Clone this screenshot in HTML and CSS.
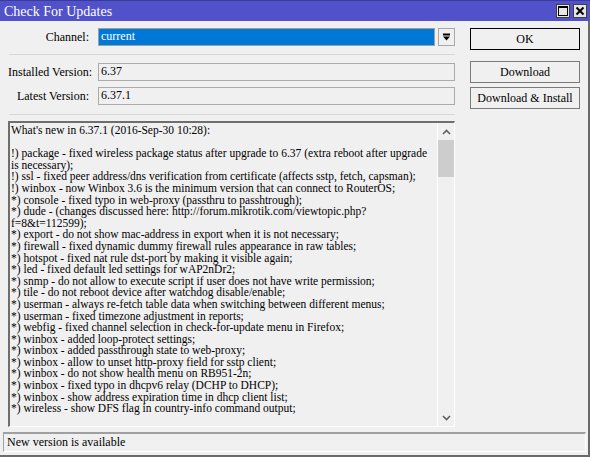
FILE: index.html
```html
<!DOCTYPE html>
<html>
<head>
<meta charset="utf-8">
<link rel="stylesheet" href="styles.css">
</head>
<body>
<div class="window">
  <div class="titlebar">
    <span class="title">Check For Updates</span>
    <div class="tb-buttons">
      <span class="tb-btn"><svg width="12" height="12" viewBox="0 0 12 12"><rect x="1.5" y="1.5" width="9" height="9" fill="none" stroke="#000" stroke-width="1"/><line x1="1" y1="2" x2="11" y2="2" stroke="#000" stroke-width="2"/></svg></span>
      <span class="tb-btn"><svg width="12" height="12" viewBox="0 0 12 12"><path d="M2.5 2.5 L9.5 9.5 M9.5 2.5 L2.5 9.5" stroke="#000" stroke-width="2"/></svg></span>
    </div>
  </div>
  <div class="body">
    <div class="main">
      <div class="left">
        <div class="row">
          <span class="label">Channel:</span>
          <div class="select">current</div>
          <span class="drop"><svg width="11" height="11" viewBox="0 0 11 11"><rect x="2" y="1.5" width="7" height="2" fill="#000"/><path d="M2 4.5 H9 L5.5 8.5 Z" fill="#000"/></svg></span>
        </div>
        <div class="sep"></div>
        <div class="row">
          <span class="label">Installed Version:</span>
          <div class="field">6.37</div>
        </div>
        <div class="row r3">
          <span class="label">Latest Version:</span>
          <div class="field">6.37.1</div>
        </div>
        <div class="sep sep2"></div>
        <div class="textarea">
          <div class="text">What's new in 6.37.1 (2016-Sep-30 10:28):<br>
<br>
!) package - fixed wireless package status after upgrade to 6.37 (extra reboot after upgrade is necessary);<br>
!) ssl - fixed peer address/dns verification from certificate (affects sstp, fetch, capsman);<br>
!) winbox - now Winbox 3.6 is the minimum version that can connect to RouterOS;<br>
*) console - fixed typo in web-proxy (passthru to passhtrough);<br>
*) dude - (changes discussed here: http://forum.mikrotik.com/viewtopic.php?<br>f=8&amp;t=112599);<br>
*) export - do not show mac-address in export when it is not necessary;<br>
*) firewall - fixed dynamic dummy firewall rules appearance in raw tables;<br>
*) hotspot - fixed nat rule dst-port by making it visible again;<br>
*) led - fixed default led settings for wAP2nDr2;<br>
*) snmp - do not allow to execute script if user does not have write permission;<br>
*) tile - do not reboot device after watchdog disable/enable;<br>
*) userman - always re-fetch table data when switching between different menus;<br>
*) userman - fixed timezone adjustment in reports;<br>
*) webfig - fixed channel selection in check-for-update menu in Firefox;<br>
*) winbox - added loop-protect settings;<br>
*) winbox - added passthrough state to web-proxy;<br>
*) winbox - allow to unset http-proxy field for sstp client;<br>
*) winbox - do not show health menu on RB951-2n;<br>
*) winbox - fixed typo in dhcpv6 relay (DCHP to DHCP);<br>
*) winbox - show address expiration time in dhcp client list;<br>
*) wireless - show DFS flag in country-info command output;</div>
          <div class="scroll">
            <span class="sarrow"><svg width="9" height="6" viewBox="0 0 9 6"><path d="M1 5 L4.5 1.5 L8 5" fill="none" stroke="#606060" stroke-width="1.6"/></svg></span>
            <div class="track"><div class="thumb"></div></div>
            <span class="sarrow"><svg width="9" height="6" viewBox="0 0 9 6"><path d="M1 1 L4.5 4.5 L8 1" fill="none" stroke="#606060" stroke-width="1.6"/></svg></span>
          </div>
        </div>
      </div>
      <div class="right">
        <div class="btn btn-ok">OK</div>
        <div class="btn btn-dl">Download</div>
        <div class="btn">Download &amp; Install</div>
      </div>
    </div>
    <div class="status">New version is available</div>
  </div>
</div>
</body>
</html>
```
FILE: styles.css
```css
html, body {
  margin: 0;
  padding: 0;
}
body {
  width: 590px;
  height: 457px;
  background: #f0f0f0;
  font-family: "Liberation Serif", "Times New Roman", serif;
  font-size: 12px;
  color: #000;
  overflow: hidden;
}
.window {
  width: 590px;
  height: 457px;
  box-sizing: border-box;
  border-right: 2px solid #6a6a6a;
  border-bottom: 2px solid #6a6a6a;
  display: flex;
  flex-direction: column;
}
.titlebar {
  height: 22px;
  background: #5151c9;
  border-top: 1px solid #3a3a9a;
  box-sizing: border-box;
  display: flex;
  align-items: center;
  justify-content: space-between;
  padding: 0 3px 0 4px;
  margin-right: -2px;
}
.title {
  color: #fff;
  font-size: 14px;
  padding-top: 1px;
}
.tb-buttons {
  display: flex;
  gap: 3px;
}
.tb-btn {
  width: 14px;
  height: 14px;
  background: #e6e6e6;
  border: 1px solid #404040;
  box-sizing: border-box;
  display: flex;
  align-items: center;
  justify-content: center;
}
.body {
  flex: 1;
  display: flex;
  flex-direction: column;
}
.main {
  display: flex;
  padding-top: 7px;
  flex: 1;
}
.left {
  width: 447px;
  padding-left: 8px;
  display: flex;
  flex-direction: column;
}
.row {
  display: flex;
  align-items: center;
  height: 18px;
}
.label {
  width: 81px;
  text-align: right;
  margin-right: 9px;
  white-space: nowrap;
}
.select {
  width: 337px;
  height: 18px;
  box-sizing: border-box;
  background: #0078d7;
  border: 1px solid #a0a0a0;
  color: #fff;
  padding-left: 2px;
  line-height: 15px;
}
.drop {
  width: 17px;
  height: 18px;
  box-sizing: border-box;
  margin-left: 3px;
  border: 1px solid #a8a8a8;
  display: flex;
  align-items: center;
  justify-content: center;
}
.sep {
  height: 1px;
  background: #d8d8d8;
  margin: 8px 0 8px 1px;
}
.field {
  flex: 1;
  height: 18px;
  box-sizing: border-box;
  border: 1px solid #ababab;
  padding-left: 2px;
  line-height: 15px;
}
.r3 { margin-top: 6px; }
.sep2 { margin: 9px 0 6px 1px; }
.textarea {
  height: 306px;
  box-sizing: border-box;
  border-top: 2px solid #6e6e6e;
  border-left: 2px solid #6e6e6e;
  border-right: 1px solid #ffffff;
  border-bottom: 1px solid #ffffff;
  display: flex;
  overflow: hidden;
}
.text {
  flex: 1;
  padding: 2px 0 0 1px;
  line-height: 11.6px;
  font-size: 11.5px;
  overflow: hidden;
}
.scroll {
  width: 16px;
  border-left: 1px solid #ffffff;
  display: flex;
  flex-direction: column;
}
.sarrow {
  height: 17px;
  display: flex;
  align-items: center;
  justify-content: center;
}
.track {
  flex: 1;
}
.thumb {
  height: 37px;
  background: #cdcdcd;
}
.right {
  margin-left: 15px;
  width: 110px;
  display: flex;
  flex-direction: column;
}
.btn {
  height: 22px;
  box-sizing: border-box;
  border: 1px solid #7a7a7a;
  display: flex;
  align-items: center;
  justify-content: center;
  margin-bottom: 4px;
  font-size: 12px;
}
.btn-ok {
  border: 1px solid #000;
  margin-bottom: 11px;
}
.status {
  margin: 5px 2px 3px 3px;
  height: 20px;
  box-sizing: border-box;
  border-top: 2px solid #a0a0a0;
  border-left: 1px solid #a0a0a0;
  border-bottom: 1px solid #ffffff;
  border-right: 1px solid #ffffff;
  padding-left: 3px;
  line-height: 16px;
}
```
